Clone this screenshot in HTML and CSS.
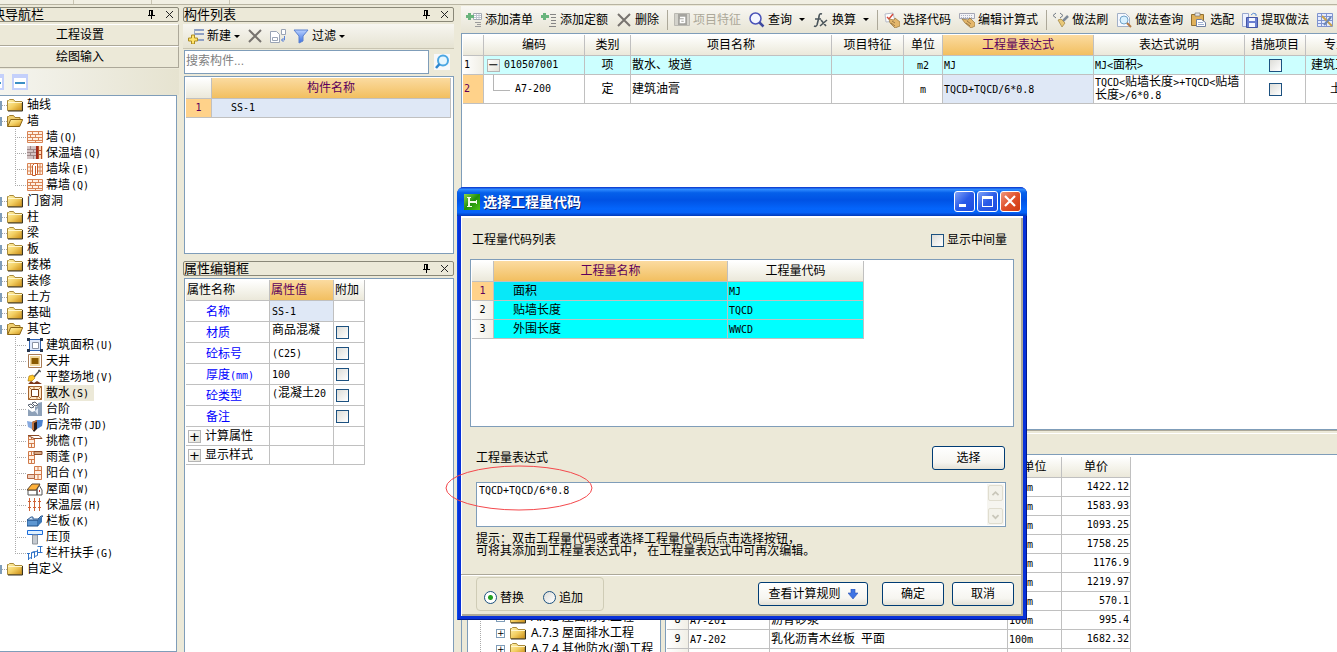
FILE: index.html
```html
<!DOCTYPE html>
<html lang="zh-CN">
<head>
<meta charset="utf-8">
<title>选择工程量代码</title>
<link rel="stylesheet" href="styles.css">
</head>
<body>
<svg class="sprite" aria-hidden="true">
  <defs>
    <linearGradient id="gFolder" x1="0" y1="0" x2="1" y2="1"><stop offset="0" stop-color="#fff3b0"/><stop offset=".5" stop-color="#f3cf62"/><stop offset="1" stop-color="#c98a12"/></linearGradient>
    <linearGradient id="gBlue" x1="0" y1="0" x2="0" y2="1"><stop offset="0" stop-color="#b8d0ff"/><stop offset="1" stop-color="#3a6fe0"/></linearGradient>
    <linearGradient id="gGreen" x1="0" y1="0" x2="1" y2="1"><stop offset="0" stop-color="#8fd84a"/><stop offset=".5" stop-color="#1f8f0c"/><stop offset="1" stop-color="#4fc414"/></linearGradient>
  </defs>
  <symbol id="folder" viewBox="0 0 16 16"><path d="M.5 13.500V3.500h1l1-1h4l1.500 2h7v9z" fill="url(#gFolder)" stroke="#a98a3a"/><path d="M1 5.500h14" stroke="#fff6cc"/><path d="M15.500 5v9H1" fill="none" stroke="#3a3320"/></symbol>
  <symbol id="folder-open" viewBox="0 0 16 16"><path d="M.5 13.500V3.500h1l1-1h4l1.500 2h5v3" fill="#f0cf70" stroke="#a07c28"/><path d="M.7 13.500l3-7h12l-3 7z" fill="url(#gFolder)" stroke="#8a6414"/></symbol>
  <symbol id="brick" viewBox="0 0 16 16"><path d="M.5 2h15v12H.5z" fill="#fff0e2"/><path d="M.5 2.500h15v11H.5zM0 5.500h16M0 8.500h16M0 11.500h16M5.500 2v3M11.500 2v3M8.500 5v3M3.500 5v3M5.500 8v3M11.500 8v3M8.500 11v3" fill="none" stroke="#d88455"/></symbol>
  <symbol id="brick-ins" viewBox="0 0 16 16"><path d="M0 1h9v13H0z" fill="#d3c3c3"/><path d="M0 4.500h9M0 7.500h9M0 10.500h9M3.500 1v3M6.500 4v3M3.500 7v3M6.500 10v4" stroke="#9e8888"/><path d="M9 1h2v13H9z" fill="#a52a1a"/><path d="M11 1h5v13h-5z" fill="#ffd9b8"/><path d="M11.500 1v13M14.500 1v13M11 5.500h4M11 9.500h4" stroke="#b5542a"/></symbol>
  <symbol id="brick-pier" viewBox="0 0 16 16"><path d="M.5 2.500h15v11H.5zM0 6h16M0 10h16M3.500 2v11M13 2v11" fill="#fff0e2" stroke="#d88455"/><path d="M5.500 4.500l2-2h3v10l-2 2h-3zM8.500 5v9" fill="#fff" stroke="#c65b28"/></symbol>
  <symbol id="area" viewBox="0 0 16 16"><path d="M2.500 2.500h11v11h-11z" fill="#dfe9fb" stroke="#2d62b4"/><path d="M5.500 5.500h6v6h-6z" fill="#fff" stroke="#8b93a4"/><path d="M0 1h3v3H0zM13 1h3v3h-3zM0 12h3v3H0zM13 12h3v3h-3z" fill="#26354d"/></symbol>
  <symbol id="well" viewBox="0 0 16 16"><path d="M1.500 1.500h13v13h-13z" fill="#fff" stroke="#a87b55"/><path d="M3 3h10v10H3z" fill="#f2d79b"/><path d="M4.500 5h7v6h-7z" fill="#8a5a00"/></symbol>
  <symbol id="shovel" viewBox="0 0 16 16"><path d="M1 15l3-3 3 2 3-2 5 3z" fill="#7b3518"/><path d="M13 1L7 8" stroke="#4c5057" stroke-width="1.500"/><path d="M11 1l3 2" stroke="#4c5057"/><path d="M2 7l4-1 2 3-3 3H1z" fill="#ffc828" stroke="#a36d00" stroke-width=".6"/></symbol>
  <symbol id="apron" viewBox="0 0 16 16"><path d="M1.500 1.500h13v13h-13z" fill="#ffe7c8" stroke="#a3622e"/><path d="M4.500 4.500h7v7h-7z" fill="#fff" stroke="#7b3d14"/><path d="M1 1l3 3M15 1l-3 3M1 15l3-3M15 15l-3-3M7 1v3M10 12v3" stroke="#b77a3c"/></symbol>
  <symbol id="steps" viewBox="0 0 16 16"><path d="M1 8l4 3v4H1zM5 15V11l3-1V6l3-1V2l4-1v14z" fill="#8ea1b8"/><path d="M1 4l3 3 3-1-3-3zM5 2l3 3 3-1-3-3z" fill="#fff" stroke="#5b6472"/><path d="M8 10l3 4V7z" fill="#dfe8f4"/></symbol>
  <symbol id="pour" viewBox="0 0 16 16"><path d="M0 4l5 1v7l-4-2z" fill="#86a9df"/><path d="M5 5l5-2v9l-3 3-2-3z" fill="#2a1b18"/><path d="M5 5l5-2 1 1-4 2v7H5z" fill="#c37642"/><path d="M10 3h6l-1 6-5 3z" fill="#4c82cf"/></symbol>
  <symbol id="eave" viewBox="0 0 16 16"><path d="M1.500 2.500h6v12h-6zM1 6.500h6M1 10.500h6M4.500 3v3M4.500 10v4" fill="#fff0e2" stroke="#d07a4a"/><path d="M1 2.500h11l3 3H7z" fill="#fff" stroke="#8b4a26"/></symbol>
  <symbol id="canopy" viewBox="0 0 16 16"><path d="M1.500 2.500h6v12h-6zM1 6.500h6M1 10.500h6M4.500 3v3M4.500 10v4" fill="#fff0e2" stroke="#d07a4a"/><path d="M7 2.500h8v3H7z" fill="#d8a680" stroke="#8b4a26"/></symbol>
  <symbol id="balcony" viewBox="0 0 16 16"><path d="M7.500 1.500h7v13h-7zM7 5.500h7M7 9.500h7M11 1v4M11 9v5" fill="#fff0e2" stroke="#d07a4a"/><path d="M.5 9.500h7v4h-7z" fill="#f1d0bb" stroke="#b26643"/></symbol>
  <symbol id="roof" viewBox="0 0 16 16"><path d="M1 9h9v5H1zM10 9l2-5 3 5v5h-5z" fill="#fff" stroke="#555"/><path d="M0 9l5-6h8l-4 6z" fill="#ffb13a" stroke="#5d4630"/><path d="M12 9h1v2h-1z" fill="#c33"/></symbol>
  <symbol id="layer" viewBox="0 0 16 16"><path d="M2.500 1v13M7.500 1v13M12.500 1v13M1 4.500h3M6 4.500h3M11 4.500h3M1 10.500h3M6 10.500h3M11 10.500h3" stroke="#cf6336" fill="none"/></symbol>
  <symbol id="rail" viewBox="0 0 16 16"><path d="M0 7h11v6H0z" fill="#5d97d2" stroke="#1d4f88"/><path d="M0 7l4-3h2v2h5l3-3h2l-5 4z" fill="#cfe3f7" stroke="#2f5d94"/><path d="M11 13V7l4-4v6z" fill="#3b77b7"/></symbol>
  <symbol id="cap" viewBox="0 0 16 16"><path d="M.5 1.500h15v4H.5z" fill="#dff0ff" stroke="#1c6bd8"/><path d="M5.500 6h5v9h-5z" fill="#c6cbd1" stroke="#8e959d"/></symbol>
  <symbol id="handrail" viewBox="0 0 16 16"><path d="M0 8.500h3M1.500 8v7M1.500 13.500l3-1v-5l3-1v5l3-1v-6M4.500 8l6-2M10.500 7.500h5M13.500 1v7M10.500 1.500h5M4.500 12v2M7.500 11v2" stroke="#2f73c8" fill="none"/></symbol>
  <symbol id="panel-min" viewBox="0 0 16 16"><path d="M1 1h14v14H1z" fill="#fff" stroke="#c4d0fb" stroke-width="2"/><path d="M0 0h16v4H0z" fill="#c4d0fb"/><path d="M3 8h10v2H3z" fill="#3b8fc4"/></symbol>
  <symbol id="pin" viewBox="0 0 9 9"><path d="M2.500 0v5M2 .500h4M5.500 0v5M4.500 0v5M1 5.500h7M4.500 6v3" stroke="#000" fill="none"/></symbol>
  <symbol id="close" viewBox="0 0 9 9"><path d="M1 1l7 7M8 1L1 8" stroke="#222" fill="none"/></symbol>
  <symbol id="new" viewBox="0 0 16 16"><path d="M7 2h9M7 6h9M9 12h7" stroke="#8fa0c4" stroke-width="2"/><path d="M6.500 1v12" stroke="#9eabc4"/><path d="M3 8h3v3h3v3H6v3H3v-3H0v-3h3z" fill="#ffe36b" stroke="#ad8c22" transform="translate(.5 -1)"/></symbol>
  <symbol id="del" viewBox="0 0 16 16"><path d="M2 2l12 12M14 2L2 14" stroke="#77736f" stroke-width="2"/></symbol>
  <symbol id="copy" viewBox="0 0 16 16"><path d="M.5 3.500h6l3 3v8h-9zM2.500 9.500h5v3h-5z" fill="#fff" stroke="#9aa4b5"/><path d="M11.500 1.500h4v5h-4z" fill="#fff" stroke="#9aa4b5"/><path d="M14.500 8v4h-3m2-2l-2 2 2 2" fill="none" stroke="#5e86d8"/></symbol>
  <symbol id="funnel" viewBox="0 0 16 16"><path d="M1 2h14L10 8v5l-4 2V8z" fill="url(#gBlue)" stroke="#5c82cf"/></symbol>
  <symbol id="magnify" viewBox="0 0 16 16"><path d="M0 0h16v16H0z" fill="#f7f8fa"/><circle cx="9" cy="6.500" r="5" fill="#e6f6ff" stroke="#4ba6e2" stroke-width="2"/><path d="M5.500 10L2 14" stroke="#2d86cf" stroke-width="2.500"/></symbol>
  <symbol id="query" viewBox="0 0 16 16"><circle cx="6.500" cy="6.500" r="5.500" fill="#f4f6ff" stroke="#4a53b8" stroke-width="1.500"/><path d="M10.500 10.500l4 4" stroke="#3f499f" stroke-width="2.500"/></symbol>
  <symbol id="add-list" viewBox="0 0 16 16"><path d="M7.500 1.500h8v6h-8z" fill="#fff" stroke="#a2a8b2"/><path d="M8 3.500h7M8 5.500h7M10.500 2v5M13 2v5" stroke="#bcc3ce"/><path d="M2 1h3v2h3v3H5v2H2V6H0V3h2z" fill="#69b47c"/><path d="M9 10.500h6M11 12.500h4M9 14.500h6" stroke="#9b9b9b"/></symbol>
  <symbol id="add-item" viewBox="0 0 16 16"><path d="M2 1h3v2h3v3H5v2H2V6H0V3h2z" fill="#69b47c"/><path d="M9 2.500h6M10 5.500h5M10 8.500h5M10 11.500h5M8 14.500h7" stroke="#858585"/></symbol>
  <symbol id="feature" viewBox="0 0 16 16"><path d="M.5 1.500h15v12H.5z" fill="#d3d2cb" stroke="#bab9b2"/><path d="M4 2h9v11H4z" fill="#a5a49f"/><path d="M6 5.500h4.500V11M10 8H6.500v2.500h4" stroke="#fff" stroke-width="1.500" fill="none"/></symbol>
  <symbol id="fx" viewBox="0 0 16 16"><path d="M9 2q-3-1-3 3L4 13q-1 2-3 1M2 7h6M8 8l5 6M14 8l-7 6" stroke="#49545a" stroke-width="1.600" fill="none"/></symbol>
  <symbol id="pick" viewBox="0 0 16 16"><path d="M1 2l8-1 2 8-9 1z" fill="#fff" stroke="#b5bac8"/><path d="M3 5l2 2 4-5" stroke="#d64b3c" stroke-width="1.500" fill="none"/><path d="M5 7l5 1 1-2 5 4v4l-5 2-5-5z" fill="#e4b76b" stroke="#94733a" stroke-width=".7"/><path d="M8 9l3 2M7 11l4 3" stroke="#9b7845"/></symbol>
  <symbol id="edit" viewBox="0 0 16 16"><path d="M.5 1.500h15v5H.5z" fill="#f3f3f7" stroke="#a5a7b5"/><path d="M2 3.500h12M2 5.500h12" stroke="#aeb5c5" stroke-dasharray="1 1"/><path d="M3 7l6 1 2-2 5 5v3l-4 2-6-5z" fill="#e4b76b" stroke="#94733a" stroke-width=".7"/><path d="M8 9l4 3M7 11l4 3" stroke="#9b7845"/></symbol>
  <symbol id="brush" viewBox="0 0 16 16"><path d="M3 1L0 3.500 3 6M7 1l3 2.500L7 6" stroke="#717a84" fill="none"/><path d="M15 4l-5 5" stroke="#7d8997" stroke-width="2.500"/><path d="M5 8l3-1 4 4-3 4z" fill="#e8c877" stroke="#9f8241" stroke-width=".7"/></symbol>
  <symbol id="page-find" viewBox="0 0 16 16"><path d="M1.500 1.500h8l4 4v9h-12z" fill="#f5f8ff" stroke="#a2b0c7"/><circle cx="8" cy="8" r="4" fill="#d9f1ff" stroke="#72a4c8"/><path d="M11 11l4 4" stroke="#b57944" stroke-width="2"/></symbol>
  <symbol id="paste" viewBox="0 0 16 16"><path d="M.5 2.500h12v11H.5z" fill="#e0b15a" stroke="#927030"/><path d="M4 1h5v3H4z" fill="#e9e9e9" stroke="#777" stroke-width=".7"/><path d="M5.500 7.500h5l4 3v4h-9z" fill="#fff" stroke="#6f7fa0"/><path d="M7 10.500h5M7 12.500h6" stroke="#9db0d4"/></symbol>
  <symbol id="extract" viewBox="0 0 16 16"><path d="M.5 1.500h6v13h-6z" fill="#eef2ff" stroke="#98a7ce"/><path d="M4.500 5.500h11v10h-11z" fill="#6b7fd1" stroke="#4456a5"/><path d="M7 6h6v3H7zM7 11h6v4H7z" fill="#f5f7ff"/><path d="M9 3q2-3 5-1v2" stroke="#5a8bd4" fill="none"/></symbol>
  <symbol id="grid-edit" viewBox="0 0 16 16"><path d="M.5 1.500h15v13H.5zM0 4.500h16M0 8.500h16M0 11.500h9M4.500 1v13M9.500 1v13" fill="#e4ebff" stroke="#7f93cf"/><path d="M5 4l10 10" stroke="#c9a24a" stroke-width="2"/><path d="M14 5l-7 8" stroke="#6d86b6" stroke-width="2"/></symbol>
</svg>

<div class="app">
  <div class="top-strip"><i></i><i></i><i></i></div>
  <div class="workspace">

    <aside class="nav">
      <header class="pane-title"><span>模块导航栏</span><svg class="s9"><use href="#pin"/></svg><svg class="s9"><use href="#close"/></svg></header>
      <button class="nav-tab">工程设置</button>
      <button class="nav-tab">绘图输入</button>
      <div class="nav-tools"><svg class="s16"><use href="#panel-min"/></svg><svg class="s16"><use href="#panel-min"/></svg></div>
      <ul class="tree">
        <li><div class="node"><svg class="s16"><use href="#folder"/></svg>轴线</div></li>
        <li><div class="node"><svg class="s16"><use href="#folder-open"/></svg>墙</div>
          <ul>
            <li><svg class="s16"><use href="#brick"/></svg><span>墙<tt>(Q)</tt></span></li>
            <li><svg class="s16"><use href="#brick-ins"/></svg><span>保温墙<tt>(Q)</tt></span></li>
            <li><svg class="s16"><use href="#brick-pier"/></svg><span>墙垛<tt>(E)</tt></span></li>
            <li><svg class="s16"><use href="#brick"/></svg><span>幕墙<tt>(Q)</tt></span></li>
          </ul></li>
        <li><div class="node"><svg class="s16"><use href="#folder"/></svg>门窗洞</div></li>
        <li><div class="node"><svg class="s16"><use href="#folder"/></svg>柱</div></li>
        <li><div class="node"><svg class="s16"><use href="#folder"/></svg>梁</div></li>
        <li><div class="node"><svg class="s16"><use href="#folder"/></svg>板</div></li>
        <li><div class="node"><svg class="s16"><use href="#folder"/></svg>楼梯</div></li>
        <li><div class="node"><svg class="s16"><use href="#folder"/></svg>装修</div></li>
        <li><div class="node"><svg class="s16"><use href="#folder"/></svg>土方</div></li>
        <li><div class="node"><svg class="s16"><use href="#folder"/></svg>基础</div></li>
        <li><div class="node"><svg class="s16"><use href="#folder-open"/></svg>其它</div>
          <ul>
            <li><svg class="s16"><use href="#area"/></svg><span>建筑面积<tt>(U)</tt></span></li>
            <li><svg class="s16"><use href="#well"/></svg><span>天井</span></li>
            <li><svg class="s16"><use href="#shovel"/></svg><span>平整场地<tt>(V)</tt></span></li>
            <li><svg class="s16"><use href="#apron"/></svg><span class="picked">散水<tt>(S)</tt></span></li>
            <li><svg class="s16"><use href="#steps"/></svg><span>台阶</span></li>
            <li><svg class="s16"><use href="#pour"/></svg><span>后浇带<tt>(JD)</tt></span></li>
            <li><svg class="s16"><use href="#eave"/></svg><span>挑檐<tt>(T)</tt></span></li>
            <li><svg class="s16"><use href="#canopy"/></svg><span>雨蓬<tt>(P)</tt></span></li>
            <li><svg class="s16"><use href="#balcony"/></svg><span>阳台<tt>(Y)</tt></span></li>
            <li><svg class="s16"><use href="#roof"/></svg><span>屋面<tt>(W)</tt></span></li>
            <li><svg class="s16"><use href="#layer"/></svg><span>保温层<tt>(H)</tt></span></li>
            <li><svg class="s16"><use href="#rail"/></svg><span>栏板<tt>(K)</tt></span></li>
            <li><svg class="s16"><use href="#cap"/></svg><span>压顶</span></li>
            <li><svg class="s16"><use href="#handrail"/></svg><span>栏杆扶手<tt>(G)</tt></span></li>
          </ul></li>
        <li><div class="node"><svg class="s16"><use href="#folder"/></svg>自定义</div></li>
      </ul>
    </aside>

    <section class="middle">
      <header class="pane-title"><span>构件列表</span><svg class="s9"><use href="#pin"/></svg><svg class="s9"><use href="#close"/></svg></header>
      <div class="list-tools">
        <button class="tool"><svg class="s16"><use href="#new"/></svg>新建<i class="caret"></i></button>
        <button class="tool" aria-label="删除"><svg class="s16"><use href="#del"/></svg></button>
        <button class="tool" aria-label="复制"><svg class="s16"><use href="#copy"/></svg></button>
        <button class="tool"><svg class="s16"><use href="#funnel"/></svg>过滤<i class="caret"></i></button>
      </div>
      <div class="search"><input type="text" placeholder="搜索构件..." aria-label="搜索构件"><button class="tool" aria-label="搜索"><svg class="s16"><use href="#magnify"/></svg></button></div>
      <div class="framed component-list">
        <table class="grid">
          <colgroup><col class="w26"><col></colgroup>
          <tr><th></th><th class="hot">构件名称</th></tr>
          <tr><td class="mark">1</td><td class="mono current indent">SS-1</td></tr>
        </table>
      </div>
      <header class="pane-title second"><span>属性编辑框</span><svg class="s9"><use href="#pin"/></svg><svg class="s9"><use href="#close"/></svg></header>
      <div class="framed properties">
        <table class="grid props">
          <colgroup><col class="w84"><col class="w64"><col class="w31"></colgroup>
          <tr><th>属性名称</th><th class="hot">属性值</th><th>附加</th></tr>
          <tr><td class="key">名称</td><td class="current"><tt>SS-1</tt></td><td></td></tr>
          <tr><td class="key">材质</td><td class="high">商品混凝</td><td><input type="checkbox" aria-label="材质"></td></tr>
          <tr><td class="key">砼标号</td><td><tt>(C25)</tt></td><td><input type="checkbox" aria-label="砼标号"></td></tr>
          <tr><td class="key">厚度<tt>(mm)</tt></td><td><tt>100</tt></td><td><input type="checkbox" aria-label="厚度"></td></tr>
          <tr><td class="key">砼类型</td><td class="high"><tt>(</tt>混凝土<tt>20</tt></td><td><input type="checkbox" aria-label="砼类型"></td></tr>
          <tr><td class="key">备注</td><td></td><td><input type="checkbox" aria-label="备注"></td></tr>
          <tr class="group"><td><button class="expand" aria-label="展开">+</button>计算属性</td><td></td><td></td></tr>
          <tr class="group"><td><button class="expand" aria-label="展开">+</button>显示样式</td><td></td><td></td></tr>
        </table>
      </div>
    </section>

    <main class="right">
      <div class="toolbar">
        <button class="tool"><svg class="s16"><use href="#add-list"/></svg>添加清单</button>
        <button class="tool"><svg class="s16"><use href="#add-item"/></svg>添加定额</button>
        <button class="tool"><svg class="s16"><use href="#del"/></svg>删除</button>
        <i class="sep"></i>
        <button class="tool" disabled><svg class="s16"><use href="#feature"/></svg>项目特征</button>
        <button class="tool"><svg class="s16"><use href="#query"/></svg>查询<i class="caret far"></i></button>
        <button class="tool"><svg class="s16"><use href="#fx"/></svg>换算<i class="caret far"></i></button>
        <i class="sep"></i>
        <button class="tool"><svg class="s16"><use href="#pick"/></svg>选择代码</button>
        <button class="tool"><svg class="s16"><use href="#edit"/></svg>编辑计算式</button>
        <i class="sep"></i>
        <button class="tool"><svg class="s16"><use href="#brush"/></svg>做法刷</button>
        <button class="tool"><svg class="s16"><use href="#page-find"/></svg>做法查询</button>
        <button class="tool"><svg class="s16"><use href="#paste"/></svg>选配</button>
        <button class="tool"><svg class="s16"><use href="#extract"/></svg>提取做法</button>
        <button class="tool"><svg class="s16"><use href="#grid-edit"/></svg>当前</button>
      </div>
      <div class="framed bill">
        <table class="grid bill-table">
          <colgroup><col class="w21"><col class="w101"><col class="w46"><col class="w201"><col class="w72"><col class="w39"><col class="w151"><col class="w151"><col class="w61"><col class="w61"></colgroup>
          <tr><th></th><th>编码</th><th>类别</th><th>项目名称</th><th>项目特征</th><th>单位</th><th class="hot">工程量表达式</th><th>表达式说明</th><th>措施项目</th><th>专业</th></tr>
          <tr class="sum"><td class="no">1</td><td><button class="expand" aria-label="折叠">−</button><tt>010507001</tt></td><td class="mid">项</td><td>散水、坡道</td><td></td><td class="mid"><tt>m2</tt></td><td><tt>MJ</tt></td><td><tt>MJ&lt;</tt>面积<tt>&gt;</tt></td><td class="mid"><input type="checkbox" aria-label="措施项目"></td><td class="wide-pad">建筑工程</td></tr>
          <tr class="tall"><td class="mark left">2</td><td><i class="elbow"></i><tt>A7-200</tt></td><td class="mid">定</td><td>建筑油膏</td><td></td><td class="mid"><tt>m</tt></td><td class="current"><tt>TQCD+TQCD/6*0.8</tt></td><td><tt>TQCD&lt;</tt>贴墙长度<tt>&gt;+TQCD&lt;</tt>贴墙长度<tt>&gt;/6*0.8</tt></td><td class="mid"><input type="checkbox" aria-label="措施项目"></td><td class="mid">土</td></tr>
        </table>
      </div>
      <div class="split-bar"></div>
      <div class="lower">
        <div class="framed chapter-pane">
          <ul class="chapters">
            <li><i class="box">+</i><svg class="s16"><use href="#folder"/></svg>A.7.2 屋面防水工程</li>
            <li><i class="box">+</i><svg class="s16"><use href="#folder"/></svg>A.7.3 屋面排水工程</li>
            <li><i class="box">+</i><svg class="s16"><use href="#folder"/></svg>A.7.4 其他防水(潮)工程</li>
          </ul>
        </div>
        <div class="framed price-pane">
          <table class="grid prices">
            <colgroup><col class="w22"><col class="w81"><col class="w238"><col class="w54"><col class="w69"></colgroup>
            <tr><th></th><th>编码</th><th>名称</th><th>单位</th><th>单价</th></tr>
            <tr><td class="no">1</td><td></td><td></td><td><tt>100m</tt></td><td class="num">1422.12</td></tr>
            <tr><td class="no">2</td><td></td><td></td><td><tt>100m</tt></td><td class="num">1583.93</td></tr>
            <tr><td class="no">3</td><td></td><td></td><td><tt>100m</tt></td><td class="num">1093.25</td></tr>
            <tr><td class="no">4</td><td></td><td></td><td><tt>100m</tt></td><td class="num">1758.25</td></tr>
            <tr><td class="no">5</td><td></td><td></td><td><tt>100m</tt></td><td class="num">1176.9</td></tr>
            <tr><td class="no">6</td><td></td><td></td><td><tt>100m</tt></td><td class="num">1219.97</td></tr>
            <tr><td class="no">7</td><td></td><td></td><td><tt>100m</tt></td><td class="num">570.1</td></tr>
            <tr><td class="no">8</td><td><tt>A7-201</tt></td><td>沥青砂浆</td><td><tt>100m</tt></td><td class="num">995.4</td></tr>
            <tr><td class="no">9</td><td><tt>A7-202</tt></td><td>乳化沥青木丝板<tt> </tt>平面</td><td><tt>100m</tt></td><td class="num">1682.32</td></tr>
            <tr><td class="no"></td><td></td><td></td><td></td><td></td></tr>
          </table>
        </div>
      </div>
    </main>
  </div>
</div>

<div class="dialog" role="dialog" aria-labelledby="dlg-title">
  <div class="caption">
    <svg class="s16" viewBox="0 0 16 16"><path d="M0 0h16v16H0z" fill="url(#gGreen)"/><path d="M3 3h4v1H6v3h6V6h1v4h-1V9H6v3h2v1H3v-1h1V4H3z" fill="#f2fbe8"/></svg>
    <h1 id="dlg-title">选择工程量代码</h1>
    <button class="win" aria-label="最小化"><svg viewBox="0 0 21 21"><path d="M5 13h7v3H5z" fill="#fff"/></svg></button>
    <button class="win" aria-label="最大化"><svg viewBox="0 0 21 21"><path d="M5 5h11v11H5zM6 8v7h9V8z" fill="#fff" fill-rule="evenodd"/></svg></button>
    <button class="win red" aria-label="关闭"><svg viewBox="0 0 21 21"><path d="M5 5l10 10M15 5L5 15" stroke="#fff" stroke-width="2.200"/></svg></button>
  </div>
  <div class="dialog-body">
    <div class="row-top"><span>工程量代码列表</span><label><input type="checkbox">显示中间量</label></div>
    <div class="framed codes">
      <table class="grid">
        <colgroup><col class="w22"><col class="w234"><col class="w136"></colgroup>
        <tr><th></th><th class="hot">工程量名称</th><th>工程量代码</th></tr>
        <tr class="cyan"><td class="mark">1</td><td class="name first">面积</td><td><tt>MJ</tt></td></tr>
        <tr class="cyan"><td class="no">2</td><td class="name">贴墙长度</td><td><tt>TQCD</tt></td></tr>
        <tr class="cyan"><td class="no">3</td><td class="name">外围长度</td><td><tt>WWCD</tt></td></tr>
      </table>
    </div>
    <div class="row-expr"><label for="expr">工程量表达式</label><button class="push w73">选择</button></div>
    <div class="framed expr">
      <textarea id="expr" spellcheck="false">TQCD+TQCD/6*0.8</textarea>
      <div class="scroll"><button aria-label="向上"><svg viewBox="0 0 15 15"><path d="M4 9.500l3.500-3.500L11 9.500" fill="none" stroke="#c9c7ba" stroke-width="2"/></svg></button><button aria-label="向下"><svg viewBox="0 0 15 15"><path d="M4 6l3.500 3.500L11 6" fill="none" stroke="#c9c7ba" stroke-width="2"/></svg></button></div>
    </div>
    <p class="hint">提示：双击工程量代码或者选择工程量代码后点击选择按钮，<br>可将其添加到工程量表达式中， 在工程量表达式中可再次编辑。</p>
    <div class="footer">
      <div class="modes">
        <label><input type="radio" name="mode" checked>替换</label>
        <label><input type="radio" name="mode">追加</label>
      </div>
      <button class="push w110">查看计算规则<svg class="down" viewBox="0 0 10 10"><path d="M3 0h4v4h3L5 10 0 4h3z" fill="#3f74e4" stroke="#2d55b4" stroke-width=".6"/></svg></button>
      <button class="push w62">确定</button>
      <button class="push w62 last">取消</button>
    </div>
  </div>
</div>
<svg class="annotation" viewBox="0 0 148 46" aria-hidden="true"><ellipse cx="74" cy="23" rx="73" ry="22" fill="none" stroke="#f4484c"/></svg>
</body>
</html>
```

FILE: styles.css
```css
* { box-sizing: border-box; }

body {
  margin: 0;
  height: 100vh;
  overflow: hidden;
  background: #ece9d8;
  color: #000;
  font: 12px/16px "Liberation Sans", "Noto Sans CJK SC", sans-serif;
}

button, input, textarea { font: inherit; color: inherit; margin: 0; }
button { padding: 0; border: 0; background: none; }
ul { list-style: none; margin: 0; padding: 0; }
i { font-style: normal; }
tt, .mono, .num, .no, .mark, textarea { font-family: "DejaVu Sans Mono", "Noto Sans CJK SC", monospace; font-size: 10px; }

.sprite { position: absolute; width: 0; height: 0; }
.s16 { width: 16px; height: 16px; flex: none; display: block; }
.s9 { width: 9px; height: 9px; flex: none; display: block; }

.app { display: flex; flex-direction: column; height: 100vh; }
.top-strip { display: flex; height: 5px; flex: none; gap: 77px; padding-left: 73px; background: #f1efe3; border-bottom: 1px solid #b8b4a2; }
.top-strip i { width: 1px; background: #c8c4b2; }
.workspace { display: flex; flex: 1; min-height: 0; }

.framed { background: #fff; border: 1px solid #7f9db9; overflow: hidden; }

/* panel headings */
.pane-title {
  display: flex; align-items: center; flex: none; gap: 9px;
  height: 15px; padding-right: 4px; margin-bottom: 2px;
  border: 1px solid #8a8878; border-radius: 2px;
  font-size: 13px; line-height: 13px; white-space: nowrap;
}
.pane-title span { flex: 1; }

/* navigation */
.nav { display: flex; flex-direction: column; flex: none; width: 197px; margin-left: -18px; padding-top: 2px; }
.nav .pane-title span { text-indent: -4px; }
.nav-tab { height: 22px; flex: none; border-top: 1px solid #fff; border-bottom: 1px solid #aca899; border-right: 1px solid #aca899; }
.nav-tools { display: flex; gap: 8px; align-items: center; flex: none; height: 26px; padding-left: 6px; margin-top: 1px; background: linear-gradient(90deg, #f6f6f2, #e6e3d0); }
.tree { flex: 1; min-height: 0; overflow: hidden; background: #fff; border: 1px solid #7f9db9; padding-top: 1px; margin-right: 2px; }
.node { display: flex; align-items: center; gap: 4px; height: 16px; padding-left: 24px; background: linear-gradient(#7f9db9, #7f9db9) 10px 4px / 9px 9px no-repeat, repeating-linear-gradient(90deg, #aaa 0 1px, transparent 1px 2px) 19px 8px / 5px 1px no-repeat; }
.tree ul { padding-left: 32px; background: repeating-linear-gradient(#aaa 0 1px, transparent 1px 2px) 32px 0 / 1px calc(100% - 7px) no-repeat; }
.tree ul li { display: flex; align-items: center; height: 16px; gap: 1px; padding-left: 12px; background: repeating-linear-gradient(90deg, #aaa 0 1px, transparent 1px 2px) 0 8px / 11px 1px no-repeat; }
.tree ul span { padding: 0 2px; height: 16px; white-space: nowrap; }
.tree ul tt { margin-left: 1px; }
.tree .picked { background: #ece9d8; padding-right: 5px; }

/* component list and properties */
.middle { display: flex; flex-direction: column; flex: none; width: 271px; margin: 2px 0 0 4px; }
.tool { display: flex; align-items: center; gap: 3px; white-space: nowrap; flex: none; }
.tool:disabled { color: #aca899; }
.caret { width: 0; height: 0; border: 3px solid transparent; border-top-color: #000; border-bottom: 0; }
.caret.far { margin-left: 4px; }
.list-tools { display: flex; align-items: center; gap: 7px; flex: none; height: 25px; padding-left: 5px; background: linear-gradient(#f7f6f1, #e6e3d2); border-bottom: 1px solid #c9c5b2; }
.search { display: flex; gap: 5px; flex: none; height: 24px; margin: 1px 0 2px 1px; }
.search input { flex: 1; min-width: 0; border: 1px solid #7f9db9; padding: 0 1px 3px; background: #fff; }
.search input::placeholder { color: #808080; opacity: 1; }
.search .tool { padding-right: 4px; }
.component-list { flex: 0 0 178px; margin-left: 1px; padding: 1px 2px 1px 1px; }
.properties { flex: 1; min-height: 0; margin-left: 1px; padding: 1px; border-bottom: 0; }
.second { margin-top: 7px; }

/* data grids */
.grid { border-collapse: separate; border-spacing: 0; table-layout: fixed; width: 100%; }
.grid th { height: 21px; padding: 0; font-weight: normal; background: linear-gradient(#fff, #f5f4ec 50%, #ebe8da); border-right: 1px solid #c0c0c0; border-bottom: 1px solid #c0c0c0; white-space: nowrap; }
.grid td { height: 19px; padding: 0 1px; line-height: 12px; background: #fff; border-right: 1px solid #c0c0c0; border-bottom: 1px solid #c0c0c0; overflow: hidden; }
.grid .hot { background: linear-gradient(#fbdba0, #f2bf60); color: #5c005c; }
.grid .no { background: linear-gradient(90deg, #fff, #f1efe6); text-align: center; }
.grid .current { background: #dfe8f6; }
.grid .indent { padding-left: 19px; }
.grid .mid { text-align: center; }
.grid .num { text-align: right; }
.grid .wide-pad { padding-left: 5px; white-space: nowrap; }

.w21 { width: 21px; } .w22 { width: 22px; } .w26 { width: 26px; } .w31 { width: 31px; }
.w39 { width: 39px; } .w46 { width: 46px; } .w54 { width: 54px; } .w61 { width: 61px; }
.w64 { width: 64px; } .w69 { width: 69px; } .w72 { width: 72px; } .w81 { width: 81px; }
.w84 { width: 84px; } .w101 { width: 101px; } .w136 { width: 136px; } .w151 { width: 151px; }
.w201 { width: 201px; } .w234 { width: 234px; } .w238 { width: 238px; }

.props { width: 179px; }
.props th { text-align: left; padding-left: 1px; }
.props td { height: 21px; padding-left: 2px; white-space: nowrap; }
.props .key { color: #00f; padding: 2px 0 0 20px; }
.props .high { padding-bottom: 4px; }
.props .group td { height: 19px; padding-top: 1px; }
.expand { display: inline-block; width: 13px; height: 13px; margin: 0 4px 0 0; border: 1px solid #b5b5b5; background: linear-gradient(135deg, #fff, #e4e2d8); font: 13px/10px "DejaVu Sans", sans-serif; text-align: center; vertical-align: middle; }

input[type="checkbox"] { appearance: none; display: inline-block; width: 13px; height: 13px; border: 1px solid #1c5180; background: linear-gradient(135deg, #dcdcd7, #fff); vertical-align: middle; }
input[type="radio"] { appearance: none; width: 13px; height: 13px; border: 1px solid #1c5180; border-radius: 50%; background: linear-gradient(135deg, #dcdcd7, #fff); }
input[type="radio"]:checked { background: radial-gradient(circle, #21a121 0 2px, #fff 3px); }

/* right side */
.right { display: flex; flex-direction: column; flex: 1; min-width: 0; margin-left: 7px; padding-top: 1px; }
.toolbar { display: flex; align-items: center; gap: 8px; flex: none; height: 27px; padding-left: 5px; overflow: hidden; background: linear-gradient(#f8f7f3, #e7e4d4); }
.sep { width: 1px; height: 20px; flex: none; margin-right: -2px; background: #aca899; }
.bill { flex: 1; min-height: 0; padding: 1px; border-right: 0; }
.bill-table { width: 904px; }
.bill-table .sum td { background: #cff; }
.bill-table .sum .no { background: linear-gradient(90deg, #fff, #f1efe6); text-align: left; }
.bill-table .tall td { height: 29px; }
.bill-table .expand { margin: 0 4px 0 2px; }
.grid .mark, .bill-table .tall .mark { background: #ffd28a; color: #5c005c; text-align: center; }
.bill-table .tall .left { text-align: left; }
.elbow { display: inline-block; width: 17px; height: 16px; margin: 0 5px 12px 8px; border-left: 1px solid #b5b5b5; border-bottom: 1px solid #b5b5b5; vertical-align: middle; }
.split-bar { flex: none; height: 24px; border-top: 1px solid #aca899; box-shadow: inset 0 2px #ece9d8, inset 0 3px #fff; }
.lower { display: flex; gap: 4px; flex: none; height: 198px; padding-left: 5px; border-left: 1px solid #7f9db9; }
.chapter-pane { display: flex; flex-direction: column; justify-content: flex-end; flex: 0 0 194px; border-bottom: 0; }
.chapters { margin-bottom: -5px; padding-left: 12px; background: repeating-linear-gradient(#aaa 0 1px, transparent 1px 2px) 12px 0 / 1px 100% no-repeat; }
.chapters li { display: flex; align-items: center; gap: 5px; height: 16px; padding-left: 16px; white-space: nowrap; font-family: "Noto Sans", "Noto Sans CJK SC", sans-serif; }
.box { width: 9px; height: 9px; flex: none; border: 1px solid #7f9db9; font: 9px/7px "DejaVu Sans", sans-serif; text-align: center; }
.price-pane { flex: 1; min-width: 0; padding: 2px 1px 0; border-bottom: 0; border-right: 0; }
.prices { width: 464px; }

/* dialog window */
.dialog {
  position: absolute; left: 457px; top: 187px; width: 570px;
  padding: 0 4px 4px; border-radius: 7px 7px 0 0;
  background: #0831d9; box-shadow: inset 1px 0 #0a49e8, inset -1px -1px #001a8f;
}
.caption {
  display: flex; align-items: center; gap: 2px; height: 29px; margin: 0 -4px; padding: 0 6px 0 7px;
  border-radius: 7px 7px 0 0; color: #fff;
  background: linear-gradient(#0830c8, #2f8bff 8%, #0560ea 20%, #0052e4 45%, #0465fb 75%, #0562f8 88%, #0038b8);
}
.caption h1 { flex: 1; margin: 0 0 0 1px; font-size: 14px; font-weight: bold; text-shadow: 1px 1px #0a2580; }
.win { width: 21px; height: 21px; border: 1px solid #fff; border-radius: 3px; background: linear-gradient(135deg, #7fa2f8, #2a5be8 50%, #1c4be0); overflow: hidden; }
.win.red { background: linear-gradient(135deg, #f0987c, #e0502a 50%, #cf3a10); }
.win svg { display: block; margin: -1px; width: 21px; height: 21px; }
.dialog-body { padding-bottom: 5px; background: #ece9d8; box-shadow: inset 1px 2px #fff, inset -2px -2px #aca899; }
.row-top { display: flex; align-items: center; justify-content: space-between; height: 43px; padding: 5px 16px 0 11px; }
.row-top label, .modes label { display: flex; align-items: center; gap: 3px; }
.codes { height: 168px; margin: 0 9px; padding: 1px; }
.codes .grid { width: 392px; }
.cyan td { background: #0ff; }
.cyan .first { background: #08e8f8; }
.grid .name { padding-left: 19px; }
.row-expr { display: flex; align-items: center; justify-content: space-between; height: 55px; padding: 7px 18px 0 15px; }
.push { height: 24px; border: 1px solid #003c74; border-radius: 3px; background: linear-gradient(#fff, #f6f5f0 70%, #e4e1d6); }
.w62 { width: 62px; } .w73 { width: 73px; } .w110 { width: 110px; }
.expr { display: flex; height: 45px; margin: 0 17px 0 15px; padding: 1px; }
textarea { flex: 1; min-width: 0; resize: none; border: 0; outline: 0; padding: 1px; line-height: 12px; }
.scroll { display: flex; flex-direction: column; justify-content: space-between; width: 17px; background: #f6f5f0; padding: 1px; }
.scroll button { width: 15px; height: 16px; border: 1px solid #e0ddcf; border-radius: 2px; background: #f3f2ea; }
.scroll svg { display: block; width: 13px; height: 13px; }
.hint { margin: 6px 0 17px 15px; line-height: 12px; }
.footer { display: flex; align-items: center; gap: 14px; padding: 2px 9px 0 15px; margin: 0 2px 0 0; border-top: 1px solid #aca899; box-shadow: inset 0 1px #fff; }
.modes { display: flex; gap: 19px; align-items: center; height: 34px; width: 128px; margin-right: auto; padding: 7px 0 0 7px; border: 1px solid #cfccb6; border-radius: 4px; }
.footer .last { margin: 0 -2px 0 -6px; }
.down { width: 10px; height: 10px; margin-left: 7px; vertical-align: -1px; }

/* marker drawn over the dialog edge */
.annotation { position: absolute; left: 445px; top: 465px; width: 148px; height: 46px; pointer-events: none; }
```
